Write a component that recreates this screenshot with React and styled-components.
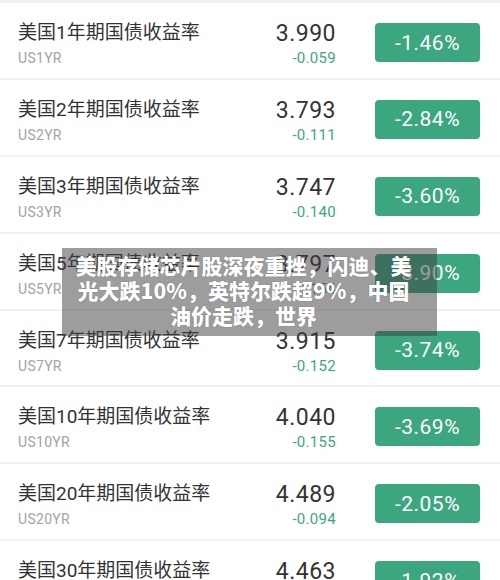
import React from "react";
import styled, { createGlobalStyle } from "styled-components";

const GlobalStyle = createGlobalStyle`
	html, body {
		margin: 0;
		padding: 0;
		background: #ffffff;
	}
	body {
		font-family: Roboto, "Noto Sans CJK SC", "Noto Sans", sans-serif;
		overflow: hidden;
	}
`;

const Page = styled.div`
	position: relative;
	width: 500px;
	height: 580px;
	overflow: hidden;
	background: #ffffff;
	border-top: 3px solid #f1f1f1;
	box-sizing: border-box;
`;

const Row = styled.div`
	display: flex;
	align-items: flex-start;
	height: 76.9px;
	padding: 18px 20px 0 18px;
	box-sizing: border-box;
	border-bottom: 2.5px solid #f1f1f1;
`;

const NameCol = styled.div`
	flex: 1;
	display: flex;
	flex-direction: column;
	gap: 4px;
`;

const Title = styled.div`
	font-size: 19px;
	line-height: 24px;
	color: #333333;
`;

const Code = styled.div`
	font-size: 14px;
	line-height: 18px;
	color: #a3a3a3;
	letter-spacing: 0.3px;
`;

const ValueCol = styled.div`
	display: flex;
	flex-direction: column;
	align-items: flex-end;
	gap: 2px;
	margin-right: 39px;
`;

const Value = styled.div`
	font-size: 23px;
	line-height: 26px;
	color: #333333;
	letter-spacing: 0.5px;
`;

const Change = styled.div`
	font-size: 15px;
	line-height: 18px;
	color: #3ca67f;
	letter-spacing: 0.3px;
`;

const Badge = styled.div`
	margin-top: 2px;
	width: 105px;
	height: 39px;
	border-radius: 4px;
	background: #3ca67f;
	color: #ffffff;
	font-size: 21px;
	display: flex;
	align-items: center;
	justify-content: center;
	letter-spacing: 0.5px;
`;

const Overlay = styled.div`
	position: absolute;
	left: 62px;
	top: 245px;
	width: 375px;
	height: 88px;
	background: rgba(60, 60, 60, 0.5);
	color: #ffffff;
	font-family: "Noto Sans CJK SC", sans-serif;
	font-weight: 900;
	font-size: 21px;
	line-height: 25px;
	text-align: center;
	padding: 5px 12px 0 0;
	box-sizing: border-box;
	text-shadow: 0 0 1px rgba(0, 0, 0, 0.4);
	white-space: nowrap;
`;

const Line = styled.div``;

const bonds = [
	{ name: "美国1年期国债收益率", code: "US1YR", value: "3.990", change: "-0.059", pct: "-1.46%" },
	{ name: "美国2年期国债收益率", code: "US2YR", value: "3.793", change: "-0.111", pct: "-2.84%" },
	{ name: "美国3年期国债收益率", code: "US3YR", value: "3.747", change: "-0.140", pct: "-3.60%" },
	{ name: "美国5年期国债收益率", code: "US5YR", value: "3.797", change: "-0.154", pct: "-3.90%" },
	{ name: "美国7年期国债收益率", code: "US7YR", value: "3.915", change: "-0.152", pct: "-3.74%" },
	{ name: "美国10年期国债收益率", code: "US10YR", value: "4.040", change: "-0.155", pct: "-3.69%" },
	{ name: "美国20年期国债收益率", code: "US20YR", value: "4.489", change: "-0.094", pct: "-2.05%" },
	{ name: "美国30年期国债收益率", code: "US30YR", value: "4.463", change: "-0.089", pct: "-1.92%" },
];

const headline = [
	"美股存储芯片股深夜重挫，闪迪、美",
	"光大跌10%，英特尔跌超9%，中国",
	"油价走跌，世界",
];

const App = () => {
	return (
		<>
			<GlobalStyle />
			<Page>
				{bonds.map((b) => (
					<Row key={b.code}>
						<NameCol>
							<Title>{b.name}</Title>
							<Code>{b.code}</Code>
						</NameCol>
						<ValueCol>
							<Value>{b.value}</Value>
							<Change>{b.change}</Change>
						</ValueCol>
						<Badge>{b.pct}</Badge>
					</Row>
				))}
				<Overlay>
					{headline.map((l) => (
						<Line key={l}>{l}</Line>
					))}
				</Overlay>
			</Page>
		</>
	);
};

export default App;
